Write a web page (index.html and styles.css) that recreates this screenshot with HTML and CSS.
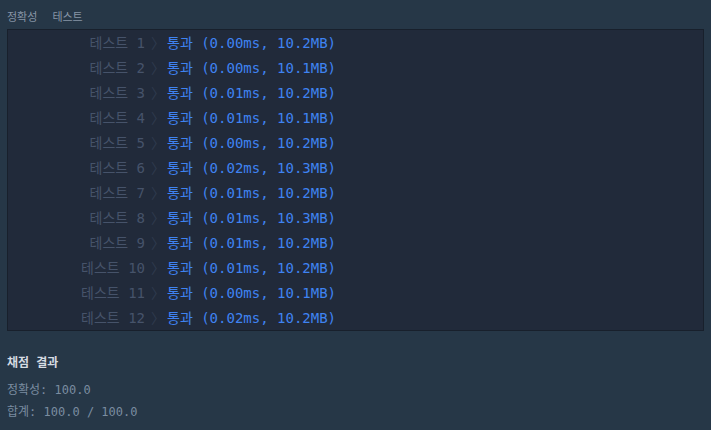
FILE: index.html
```html
<!DOCTYPE html>
<html lang="ko">
<head>
    <meta charset="UTF-8">
    <meta name="viewport" content="width=device-width, initial-scale=1.0">
    <title>채점 결과</title>
    <link rel="stylesheet" href="styles.css">
</head>
<body>
    <div class="tabs">
        <span>정확성</span>
        <span>테스트</span>
    </div>

    <table class="result-table">
        <tr><td class="label">테스트 1</td><td class="arrow">〉</td><td class="pass">통과 (0.00ms, 10.2MB)</td></tr>
        <tr><td class="label">테스트 2</td><td class="arrow">〉</td><td class="pass">통과 (0.00ms, 10.1MB)</td></tr>
        <tr><td class="label">테스트 3</td><td class="arrow">〉</td><td class="pass">통과 (0.01ms, 10.2MB)</td></tr>
        <tr><td class="label">테스트 4</td><td class="arrow">〉</td><td class="pass">통과 (0.01ms, 10.1MB)</td></tr>
        <tr><td class="label">테스트 5</td><td class="arrow">〉</td><td class="pass">통과 (0.00ms, 10.2MB)</td></tr>
        <tr><td class="label">테스트 6</td><td class="arrow">〉</td><td class="pass">통과 (0.02ms, 10.3MB)</td></tr>
        <tr><td class="label">테스트 7</td><td class="arrow">〉</td><td class="pass">통과 (0.01ms, 10.2MB)</td></tr>
        <tr><td class="label">테스트 8</td><td class="arrow">〉</td><td class="pass">통과 (0.01ms, 10.3MB)</td></tr>
        <tr><td class="label">테스트 9</td><td class="arrow">〉</td><td class="pass">통과 (0.01ms, 10.2MB)</td></tr>
        <tr><td class="label">테스트 10</td><td class="arrow">〉</td><td class="pass">통과 (0.01ms, 10.2MB)</td></tr>
        <tr><td class="label">테스트 11</td><td class="arrow">〉</td><td class="pass">통과 (0.00ms, 10.1MB)</td></tr>
        <tr><td class="label">테스트 12</td><td class="arrow">〉</td><td class="pass">통과 (0.02ms, 10.2MB)</td></tr>
    </table>

    <div class="summary">
        <h3>채점 결과</h3>
        <p>정확성: 100.0</p>
        <p>합계: 100.0 / 100.0</p>
    </div>
</body>
</html>
```

FILE: styles.css
```css
body { margin: 0; padding: 0 7px; background: #263747; color: #d0d6de; font-family: "DejaVu Sans Mono", "Noto Sans CJK KR", monospace; }
.tabs { display: flex; gap: 15px; height: 29px; align-items: center; font-size: 11px; color: #8795a6; padding-top: 2px; box-sizing: border-box; }
.result-table { width: 100%; border-collapse: collapse; background: #212a3a; border: 1px solid #18202c; font-size: 14px; }
.result-table td { height: 23px; padding: 0 0 2px; white-space: nowrap; }
.label { width: 137px; text-align: right; color: #46536a; }
.arrow { width: 16px; padding-left: 6px !important; color: #2f3a4e; }
.pass { color: #3f83f2; }
.summary { padding-top: 22px; }
.summary h3 { margin: 0 0 6px; font-size: 12px; font-weight: bold; color: #d5dbe2; line-height: 20px; }
.summary p { margin: 0; font-size: 12px; color: #7a8ca0; line-height: 22px; }
```
